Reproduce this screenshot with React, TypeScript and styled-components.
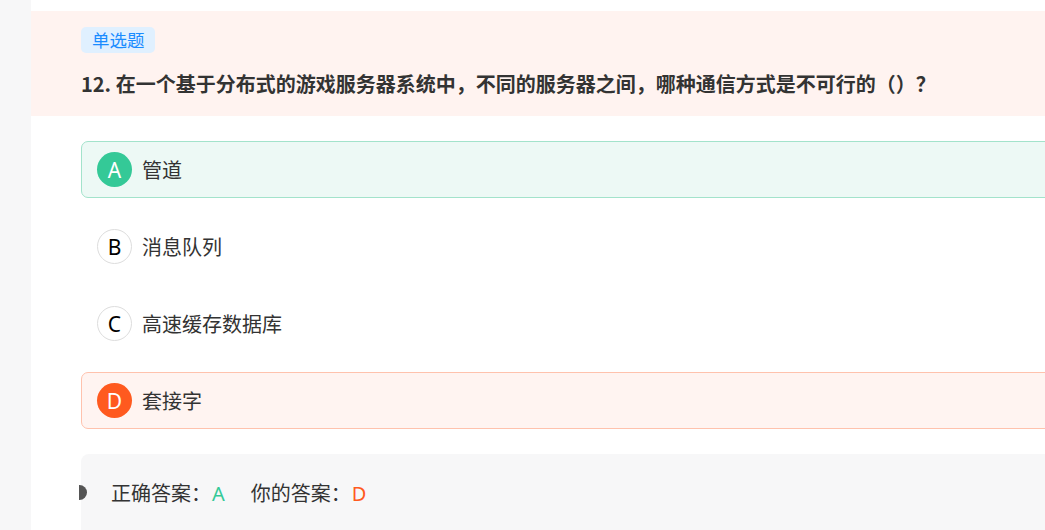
import React from "react";
import styled, { createGlobalStyle } from "styled-components";

const GlobalStyle = createGlobalStyle`
  html, body {
    margin: 0;
    padding: 0;
    overflow: hidden;
    background: #f7f7f8;
    font-family: "Noto Sans CJK SC", "Noto Sans", sans-serif;
  }
`;

const Page = styled.div`
  margin-left: 31px;
  width: 1100px;
  min-height: 530px;
  background: #ffffff;
  padding-top: 11px;
`;

const Header = styled.div`
  background: #fff3f0;
  padding: 16px 50px 17px;
`;

const Tag = styled.span`
  display: inline-block;
  height: 26px;
  line-height: 26px;
  padding: 0 10px 0 11px;
  border-radius: 5px;
  background: #e0f0ff;
  color: #1a8cff;
  font-size: 17.5px;
`;

const Question = styled.div`
  margin-top: 16px;
  font-size: 20px;
  font-weight: 700;
  line-height: 30px;
  color: #333333;
`;

const OptionList = styled.div`
  display: flex;
  flex-direction: column;
  gap: 20px;
  padding: 25px 0 0 50px;
`;

type Status = "right" | "wrong" | "none";

const OptionRow = styled.div<{ $status: Status }>`
  box-sizing: border-box;
  height: 57px;
  display: flex;
  align-items: center;
  gap: 10px;
  padding-left: 15px;
  border-radius: 7px;
  border: 1px solid
    ${(p) =>
      p.$status === "right" ? "#a3e3cb" : p.$status === "wrong" ? "#ffc2ad" : "transparent"};
  background: ${(p) =>
    p.$status === "right" ? "#edf9f5" : p.$status === "wrong" ? "#fff4f1" : "transparent"};
`;

const Letter = styled.span<{ $status: Status }>`
  box-sizing: border-box;
  width: 35px;
  height: 35px;
  border-radius: 50%;
  display: flex;
  align-items: center;
  justify-content: center;
  font-family: "Noto Sans", sans-serif;
  font-size: 21px;
  color: ${(p) => (p.$status === "none" ? "#000000" : "#ffffff")};
  background: ${(p) =>
    p.$status === "right" ? "#34c997" : p.$status === "wrong" ? "#ff5a1f" : "#ffffff"};
  border: ${(p) => (p.$status === "none" ? "1px solid #dddddd" : "none")};
`;

const OptionText = styled.span`
  font-size: 20px;
  color: #333333;
`;

const AnswerPanel = styled.div`
  position: relative;
  margin: 25px 0 0 50px;
  padding: 24px 30px 30px;
  background: #f7f7f8;
  border-radius: 8px 0 0 0;
  font-size: 20px;
  color: #333333;
  display: flex;
  align-items: center;
  gap: 26px;

  &::before {
    content: "";
    position: absolute;
    left: -2px;
    top: 31px;
    width: 8px;
    height: 15px;
    border-radius: 0 8px 8px 0;
    background: #555555;
  }
`;

const AnswerItem = styled.span``;

const AnswerValue = styled.span<{ $color: string }>`
  font-family: "Noto Sans", sans-serif;
  margin-left: 1px;
  color: ${(p) => p.$color};
`;

const options: { key: string; text: string; status: Status }[] = [
  { key: "A", text: "管道", status: "right" },
  { key: "B", text: "消息队列", status: "none" },
  { key: "C", text: "高速缓存数据库", status: "none" },
  { key: "D", text: "套接字", status: "wrong" },
];

const App = () => {
  return (
    <>
      <GlobalStyle />
      <Page>
        <Header>
          <Tag>单选题</Tag>
          <Question>
            12. 在一个基于分布式的游戏服务器系统中，不同的服务器之间，哪种通信方式是不可行的（）？
          </Question>
        </Header>
        <OptionList>
          {options.map((o) => (
            <OptionRow key={o.key} $status={o.status}>
              <Letter $status={o.status}>{o.key}</Letter>
              <OptionText>{o.text}</OptionText>
            </OptionRow>
          ))}
        </OptionList>
        <AnswerPanel>
          <AnswerItem>
            正确答案：<AnswerValue $color="#34c997">A</AnswerValue>
          </AnswerItem>
          <AnswerItem>
            你的答案：<AnswerValue $color="#ff5a1f">D</AnswerValue>
          </AnswerItem>
        </AnswerPanel>
      </Page>
    </>
  );
};

export default App;
